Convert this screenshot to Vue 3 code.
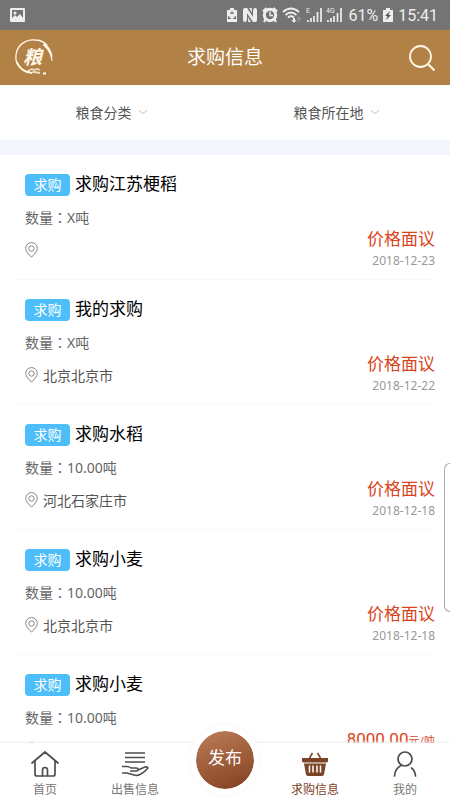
<script setup>
const items = [
  { id: 1, title: '求购江苏梗稻', amount: 'X吨', place: '', price: '价格面议', unit: '', date: '2018-12-23' },
  { id: 2, title: '我的求购', amount: 'X吨', place: '北京北京市', price: '价格面议', unit: '', date: '2018-12-22' },
  { id: 3, title: '求购水稻', amount: '10.00吨', place: '河北石家庄市', price: '价格面议', unit: '', date: '2018-12-18' },
  { id: 4, title: '求购小麦', amount: '10.00吨', place: '北京北京市', price: '价格面议', unit: '', date: '2018-12-18' },
  { id: 5, title: '求购小麦', amount: '10.00吨', place: '', price: '8000.00', unit: '元/吨', date: '' },
]
const filters = ['粮食分类', '粮食所在地']
</script>

<template>
  <div class="screen">
    <div class="status">
      <svg class="photo" width="15" height="14" viewBox="0 0 15 14">
        <rect width="15" height="14" rx="1" fill="#eee" />
        <path d="M2 2h11v8l-3-4-3 3-2-2-3 3z" fill="#747474" />
        <circle cx="5" cy="5" r="1.6" fill="#eee" />
      </svg>
      <div class="status-right">
        <svg width="12" height="16" viewBox="0 0 12 16">
          <path d="M4 1h4v2h3v12H1V3h3z" fill="#eee" />
          <path d="M4.500 7L6 5l1.500 2M9 9l.5 2.500H7M3 9l-.5 2.500H5" fill="none" stroke="#666" stroke-width="1.200" />
        </svg>
        <svg width="16" height="16" viewBox="0 0 16 16">
          <path d="M1 3q0-2 2-2h2l6 9V4l1-3h1q2 0 2 2v10q0 2-2 2h-2L5 6v6l-1 3H3q-2 0-2-2z" fill="#eee" />
          <path d="M7 1h3v5zM9 15H6v-5z" fill="#ddd" />
        </svg>
        <svg width="16" height="16" viewBox="0 0 16 16">
          <circle cx="8" cy="8" r="5.700" fill="none" stroke="#eee" stroke-width="3" />
          <path d="M1 4.500L4.500 1M15 4.500L11.500 1M3.500 12.500l-1.500 2.500M12.500 12.500l1.500 2.500" stroke="#eee" stroke-width="2.200" />
          <path d="M8 4.500v4h3" fill="none" stroke="#eee" stroke-width="1.400" />
        </svg>
        <svg class="wifi" width="20" height="16" viewBox="0 0 20 16">
          <path d="M1 5Q9-2 17 5M3.500 8Q9 3 14.500 8M6 10.500Q9 8 12 10.500" fill="none" stroke="#eee" stroke-width="1.800" />
          <path d="M11 11h2v2h1.500L12 16l-2.500-3H11z" fill="#eee" />
          <path d="M17 15V10l-2 2.500M17 10l2 2.500" fill="none" stroke="#a0a0a0" />
        </svg>
        <svg width="16" height="16" viewBox="0 0 16 16">
          <text x="0" y="6" class="tiny">E</text>
          <path d="M2 13v2M5 11v4M8 9v6M11.500 5v10M15 1v14" stroke="#eee" stroke-width="1.700" />
        </svg>
        <svg width="16" height="16" viewBox="0 0 16 16">
          <text x="0" y="6" class="tiny">4G</text>
          <path d="M2 13v2M5 11v4M8 9v6M11.500 6v9M15 1v14" stroke="#eee" stroke-width="1.700" />
        </svg>
        <span class="percent">61%</span>
        <svg width="12" height="16" viewBox="0 0 12 16">
          <path d="M4 1h4v2h3v12H1V3h3z" fill="#eee" />
          <path d="M8 4L3 9h2.500L4 13l5-5H6.500z" fill="#555" />
        </svg>
        <span>15:41</span>
      </div>
    </div>

    <header class="header">
      <svg class="logo" width="40" height="40" viewBox="0 0 40 40" fill="none" stroke="#fff8e9">
        <path d="M16 34C6 32 1 26 2 17C3 7 12 1 21 2C26 2 30 4 33 7" stroke-width="1.300" />
        <path d="M3 24C6 31 11 35 18 35" stroke-width="1.600" />
        <path d="M31 5Q37 11 38 17V23L36 16Q34 11 29 7z" fill="#fff8e9" stroke-width=".5" />
        <path d="M14 33l4-2 2 1 3-1 3 1M16 35l4-1 6 1" stroke-width="1.800" opacity=".75" />
        <path d="M29 35.500h3" stroke-width="2" />
        <text x="9" y="26" class="mark">粮</text>
      </svg>
      <h1>求购信息</h1>
      <button class="search" aria-label="搜索">
        <svg width="28" height="28" viewBox="0 0 28 28" fill="none" stroke="#fff8e9" stroke-width="1.800">
          <circle cx="12.500" cy="12.500" r="10.500" />
          <path d="M20 20l6.500 6.500" stroke-width="2.200" />
        </svg>
      </button>
    </header>

    <nav class="filters">
      <button v-for="f in filters" :key="f">
        {{ f }}
        <svg width="10" height="6" viewBox="0 0 10 6" fill="none" stroke="#c4c4c4"><path d="M.5 1L5 4.500L9.500 1" /></svg>
      </button>
    </nav>

    <main class="list">
      <article v-for="item in items" :key="item.id" class="item">
        <div class="title-row">
          <span class="tag">求购</span>
          <h2>{{ item.title }}</h2>
        </div>
        <p class="amount">数量<span class="colon">：</span>{{ item.amount }}</p>
        <div class="bottom">
          <p class="place">
            <svg width="13" height="16" viewBox="0 0 13 16" fill="none" stroke="#858585">
              <path d="M6.500 15.200C4 12.500.7 9.500.7 6.400a5.800 5.800 0 0 1 11.600 0C12.300 9.500 9 12.500 6.500 15.200z" />
              <circle cx="6.500" cy="6.500" r="2.700" />
            </svg>
            {{ item.place }}
          </p>
          <div class="deal">
            <strong>{{ item.price }}<small>{{ item.unit }}</small></strong>
            <time>{{ item.date }}</time>
          </div>
        </div>
      </article>
    </main>

    <div class="edge-handle"></div>

    <nav class="tabs">
      <a href="#home">
        <svg width="28" height="26" viewBox="0 0 28 26" fill="none" stroke="#4d4d4d" stroke-width="1.700" stroke-linecap="round" stroke-linejoin="round">
          <path d="M1 12L14 1l13 11M4 10v13q0 2 2 2h16q2 0 2-2V10" />
          <path d="M11.500 24.500V19q0-2.500 2.500-2.500t2.500 2.500v5.500" />
        </svg>
        首页
      </a>
      <a href="#sell">
        <svg width="28" height="26" viewBox="0 0 28 26" fill="none" stroke="#4d4d4d" stroke-width="1.500" stroke-linejoin="round">
          <path d="M4 2h20M4 6.500h20M4 11h20" />
          <path d="M1 15.500h5q2 0 4 1.500h5q2 0 2 1.500t-2 1.500H9M17 19l7-3q2-.5 3 1-3 4-8 6.500-3 1.500-6 .5L6 22H1" />
        </svg>
        出售信息
      </a>
      <a href="#publish" class="publish"><span>发布</span></a>
      <a href="#buy" class="active">
        <svg width="28" height="26" viewBox="0 0 28 26">
          <path d="M8.500 7l3-5M19.500 7l-3-5" stroke="#7b4427" stroke-width="1.500" fill="none" />
          <path d="M1 7h26v3q0 1-1.500 1.500h-23Q1 11 1 10zM3 12.500h22l-2 11q-.5 1.500-2.500 1.500h-13Q5.500 25 5 23.500z" fill="#7b4427" />
          <path d="M8.500 14.500v7M12 14.500v7M16 14.500v7M19.500 14.500v7" stroke="#fff" stroke-width="1.500" />
        </svg>
        求购信息
      </a>
      <a href="#mine">
        <svg width="28" height="26" viewBox="0 0 28 26" fill="none" stroke="#4d4d4d" stroke-width="1.700" stroke-linecap="round">
          <circle cx="14" cy="8" r="7" />
          <path d="M3.500 25q.5-7.500 6.500-10.500M20.500 17q3.500 2.500 4 8" />
        </svg>
        我的
      </a>
    </nav>
  </div>
</template>

<style>
body { margin: 0; }
</style>

<style scoped>
.screen {
  position: relative;
  display: flex;
  flex-direction: column;
  height: 100vh;
  overflow: hidden;
  background: #fff;
  color: #555;
  font-family: Roboto, "Noto Sans CJK SC", sans-serif;
  font-size: 14px;
}
h1, h2, p { margin: 0; font-weight: 400; }
button { border: 0; padding: 0; background: none; font: inherit; color: inherit; }
a { color: inherit; text-decoration: none; }
svg { display: block; flex: none; }

.status {
  display: flex;
  align-items: center;
  justify-content: space-between;
  flex: none;
  height: 30px;
  padding: 0 12px 0 10px;
  background: #747474;
  color: #eee;
  font-size: 16px;
}
.status-right { display: flex; align-items: center; gap: 4px; }
.percent { margin-left: 2px; }
.tiny { font-size: 7px; fill: #eee; }

.header {
  display: grid;
  grid-template-columns: 1fr auto 1fr;
  align-items: center;
  flex: none;
  height: 55px;
  padding: 0 14px;
  background: #b28146;
  color: #fff;
}
.header h1 { font-size: 19px; line-height: 28px; }
.mark { font-family: "Noto Sans CJK SC", sans-serif; font-size: 19px; font-weight: 700; font-style: italic; fill: #fff8e9; stroke: none; }
.search { justify-self: end; }

.filters {
  display: grid;
  grid-template-columns: 1fr 1fr;
  flex: none;
  height: 55px;
  border-bottom: 15px solid #f3f6fb;
}
.filters button { display: flex; align-items: center; justify-content: center; gap: 6px; padding: 0 2px 2px 0; }

.list { flex: 1; min-height: 0; overflow: hidden; }
.item {
  box-sizing: border-box;
  height: 125px;
  margin: 0 15px;
  padding: 18px 0 0 10px;
  border-bottom: 1px solid #f8f8f8;
}
.title-row { display: flex; align-items: center; gap: 5px; height: 23px; }
.tag {
  width: 45px;
  border-radius: 4px;
  background: #4dbefa;
  color: #fff;
  line-height: 22px;
  text-align: center;
}
h2 { color: #000; font-size: 17px; line-height: 23px; }
.amount { margin-top: 11px; font-family: "Noto Sans", "Noto Sans CJK SC", sans-serif; line-height: 20px; color: #666; }
.colon { font-family: "Noto Sans CJK TC", sans-serif; }
.bottom { display: flex; justify-content: space-between; align-items: flex-start; }
.place { display: flex; align-items: center; gap: 5px; height: 20px; margin-top: 12px; }
.deal { display: flex; flex-direction: column; align-items: flex-end; }
.deal strong { color: #d9441a; font-size: 17px; line-height: 22px; font-weight: 400; }
.deal small { font-size: 11px; }
.deal time { color: #999; font-family: "Noto Sans", sans-serif; font-size: 12px; line-height: 16px; }

.edge-handle {
  position: absolute;
  top: 463px;
  right: 0;
  box-sizing: border-box;
  width: 6px;
  height: 149px;
  border: 1px solid #aaa;
  border-right: 0;
  border-radius: 6px 0 0 6px;
  background: #fff;
}

.tabs {
  display: grid;
  grid-template-columns: repeat(5, 1fr);
  flex: none;
  height: 57px;
  background: #fff;
  box-shadow: 0 -1px 2px #eee;
}
.tabs a {
  display: flex;
  flex-direction: column;
  align-items: center;
  gap: 4px;
  padding-top: 8px;
  color: #777;
  font-size: 12px;
  line-height: 18px;
}
.tabs .active { color: #7b4427; }
.tabs .publish { position: relative; padding: 0; }
.publish span {
  position: absolute;
  top: -18px;
  width: 58px;
  height: 58px;
  border: 6px solid #fff;
  border-radius: 50%;
  background: linear-gradient(160deg, #bd7e58, #813f20) padding-box;
  box-shadow: 0 0 3px #f4efeb;
  color: #fff;
  font-size: 17px;
  line-height: 54px;
  text-align: center;
}
</style>
